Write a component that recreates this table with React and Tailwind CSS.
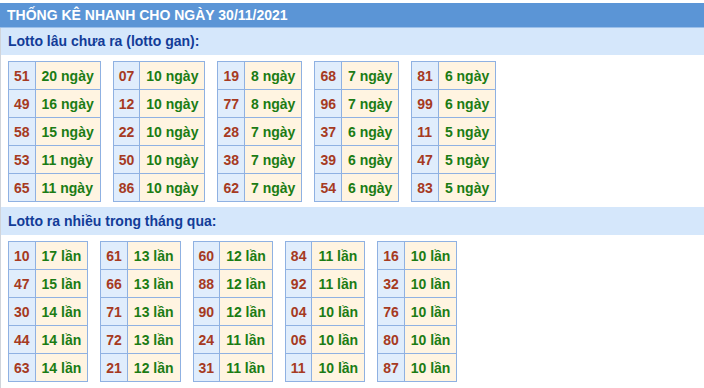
const gan = [
  [["51", "20 ngày"], ["49", "16 ngày"], ["58", "15 ngày"], ["53", "11 ngày"], ["65", "11 ngày"]],
  [["07", "10 ngày"], ["12", "10 ngày"], ["22", "10 ngày"], ["50", "10 ngày"], ["86", "10 ngày"]],
  [["19", "8 ngày"], ["77", "8 ngày"], ["28", "7 ngày"], ["38", "7 ngày"], ["62", "7 ngày"]],
  [["68", "7 ngày"], ["96", "7 ngày"], ["37", "6 ngày"], ["39", "6 ngày"], ["54", "6 ngày"]],
  [["81", "6 ngày"], ["99", "6 ngày"], ["11", "5 ngày"], ["47", "5 ngày"], ["83", "5 ngày"]],
];

const nhieu = [
  [["10", "17 lần"], ["47", "15 lần"], ["30", "14 lần"], ["44", "14 lần"], ["63", "14 lần"]],
  [["61", "13 lần"], ["66", "13 lần"], ["71", "13 lần"], ["72", "13 lần"], ["21", "12 lần"]],
  [["60", "12 lần"], ["88", "12 lần"], ["90", "12 lần"], ["24", "11 lần"], ["31", "11 lần"]],
  [["84", "11 lần"], ["92", "11 lần"], ["04", "10 lần"], ["06", "10 lần"], ["11", "10 lần"]],
  [["16", "10 lần"], ["32", "10 lần"], ["76", "10 lần"], ["80", "10 lần"], ["87", "10 lần"]],
];

function Box({ rows }) {
  return (
    <table className="border-collapse">
      <tbody>
        {rows.map(([n, v]) => (
          <tr key={n} className="h-[28px]">
            <td className="border border-[#8fb1e2] bg-[#e0edfc] px-[5px] py-0 text-[#a63a22] leading-[16px]">{n}</td>
            <td className="border border-[#8fb1e2] bg-[#fff4e1] px-[6px] py-0 text-[#1b7c14] leading-[16px] whitespace-nowrap">{v}</td>
          </tr>
        ))}
      </tbody>
    </table>
  );
}

export default function App() {
  return (
    <div className="w-[720px] h-[388px] bg-white pt-[3px] font-['Liberation_Sans',Arial,sans-serif] font-bold text-[14px] overflow-hidden">
      <div className="h-[25px] bg-[#5b95d6] text-white flex items-center pl-[7px] border-b border-[#9cc0ea]">
        THỐNG KÊ NHANH CHO NGÀY 30/11/2021
      </div>
      <div className="border-l border-[#cfd4db]">
        <div className="h-[27px] bg-[#d5e7fb] text-[#123c98] flex items-center pl-[7px]">
          Lotto lâu chưa ra (lotto gan):
        </div>
        <div className="flex gap-[12px] pl-[7px] pt-[6px] pb-[5px]">
          {gan.map((c, i) => (
            <Box key={i} rows={c} />
          ))}
        </div>
        <div className="h-[28px] bg-[#d5e7fb] text-[#123c98] flex items-center pl-[7px]">
          Lotto ra nhiều trong tháng qua:
        </div>
        <div className="flex gap-[12px] pl-[7px] pt-[6px] pb-[8px]">
          {nhieu.map((c, i) => (
            <Box key={i} rows={c} />
          ))}
        </div>
      </div>
    </div>
  );
}
